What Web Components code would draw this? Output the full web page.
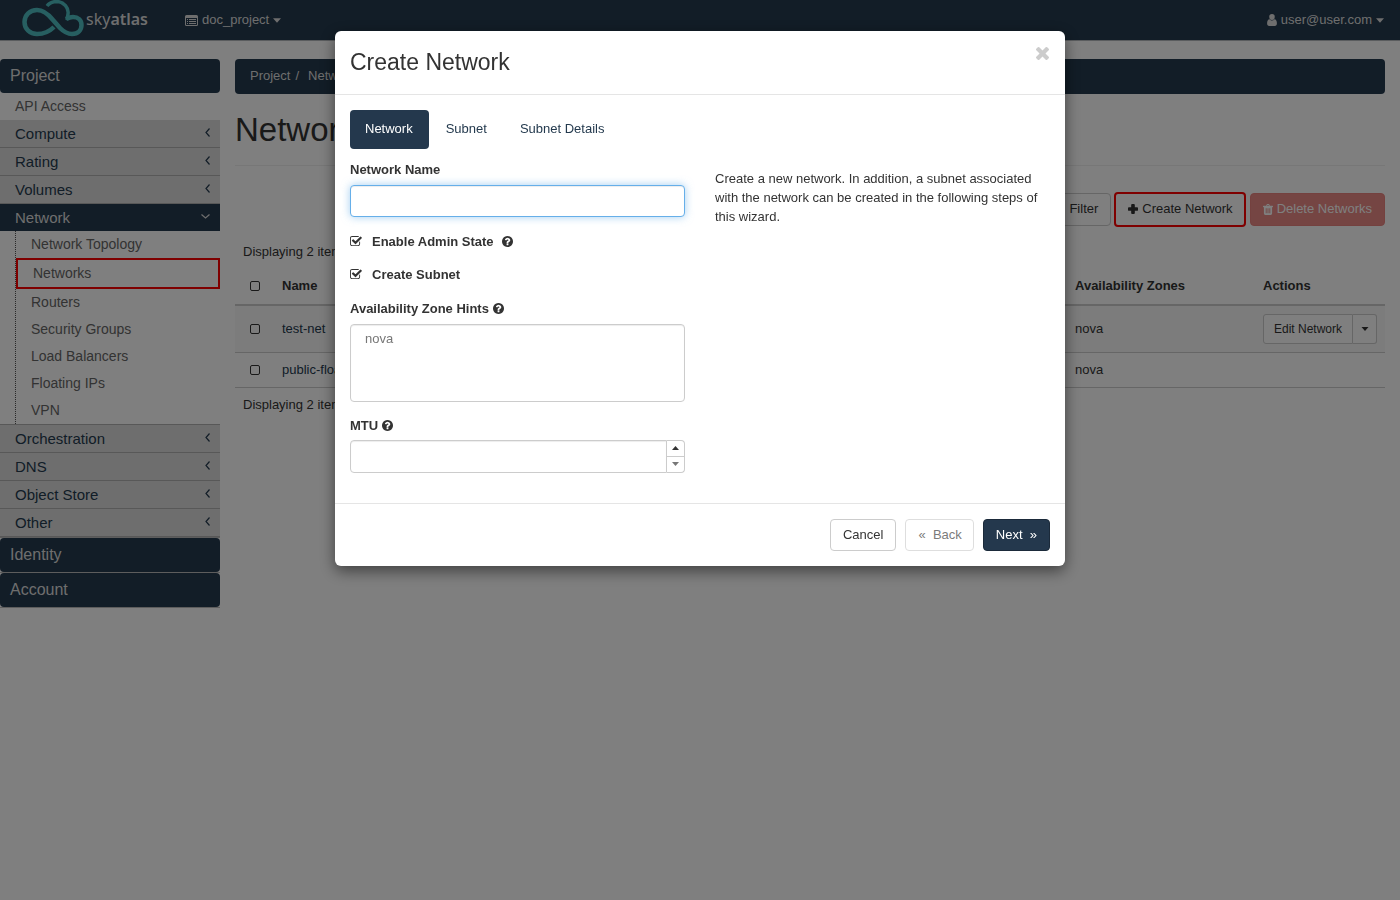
<!DOCTYPE html>
<html lang="en">
<head>
<meta charset="utf-8">
<title>Networks - Create Network</title>
<style>
  body { margin: 0; background: #fff; color: #333; font: 13px/18px "Liberation Sans", Arial, sans-serif; }
</style>
</head>
<body>
<cloud-dashboard></cloud-dashboard>
<script>
const base = `*,*::before,*::after{box-sizing:border-box}
a{color:inherit;text-decoration:none}
button,input,select{font:inherit;color:inherit;margin:0}`;

function define(name, css, html, setup) {
  const template = document.createElement('template');
  customElements.define(name, class extends HTMLElement {
    constructor() {
      super();
      template.innerHTML = `<style>${base}${css}</style>${typeof html === 'function' ? html(this) : html}`;
      this.attachShadow({ mode: 'open' }).append(template.content.cloneNode(true));
      if (setup) setup(this, this.shadowRoot);
    }
  });
}

const icons = {
  'help': ['0 128 1536 1536', '<path d="M896 1376v-192q0-14-9-23t-23-9H672q-14 0-23 9t-9 23v192q0 14 9 23t23 9h192q14 0 23-9t9-23zm256-672q0-88-55.5-163T958 425t-170-41q-243 0-371 213-15 24 8 42l132 100q7 6 19 6 16 0 25-12 53-68 86-92 34-24 86-24 48 0 85.5 26t37.5 59q0 38-20 61t-68 45q-63 28-115.5 86.5T640 1020v36q0 14 9 23t23 9h192q14 0 23-9t9-23q0-19 21.5-49.5T972 957q32-18 49-28.5t46-35 44.5-48 28-60.5 12.5-81zm384 192q0 209-103 385.5T1153.5 1561 768 1664t-385.5-103T103 1281.5 0 896t103-385.5T382.5 231 768 128t385.5 103T1433 510.5 1536 896z"/>'],
  'close': ['110 366 1188 1188', '<path d="M1298 1322q0 40-28 68l-136 136q-28 28-68 28t-68-28l-294-294-294 294q-28 28-68 28t-68-28L138 1390q-28-28-28-68t28-68l294-294-294-294q-28-28-28-68t28-68l136-136q28-28 68-28t68 28l294 294 294-294q28-28 68-28t68 28l136 136q28 28 28 68t-28 68L976 960l294 294q28 28 28 68z"/>'],
  'list': ['0 0 26 22', '<path fill-rule="evenodd" d="M3 0h20a3 3 0 0 1 3 3v16a3 3 0 0 1-3 3H3a3 3 0 0 1-3-3V3a3 3 0 0 1 3-3zM2 6v13q0 1 1 1h20q1 0 1-1V6zM4 8h2v2H4zm0 4h2v2H4zm0 4h2v2H4zM8 8h14v2H8zm0 4h14v2H8zm0 4h14v2H8z"/>'],
  'user': ['0 0 18 22', '<path d="M9 0a5 5 0 0 1 5 5.500a5 5.500 0 0 1-10 0A5 5 0 0 1 9 0zM4.500 9.500Q6.500 12 9 12t4.500-2.500Q18 10 18 17q0 5-4 5H4q-4 0-4-5 0-7 4.500-7.500z"/>'],
  'plus': ['0 0 22 22', '<path d="M9 0h4q2 0 2 2v5h5q2 0 2 2v4q0 2-2 2h-5v5q0 2-2 2H9q-2 0-2-2v-5H2q-2 0-2-2V9q0-2 2-2h5V2q0-2 2-2z"/>'],
  'trash': ['0 0 22 24', '<path fill-rule="evenodd" d="M7 4l1-3q.5-1 1.500-1h3q1 0 1.500 1l1 3h6q1 0 1 1v1q0 1-1 1h-1v14q0 3-3 3H5q-3 0-3-3V7H1q-1 0-1-1V5q0-1 1-1zm2 0h4l-.5-2h-3zM6 9v11h2V9zm4 0v11h2V9zm4 0v11h2V9z"/>'],
  'caret-down': ['0 0 14 8', '<path d="M0 0h14L7 8z"/>'],
  'caret-up': ['0 0 14 8', '<path d="M0 8h14L7 0z"/>'],
  'left': ['0 0 10 18', '<path fill="none" stroke="currentColor" stroke-width="2.400" d="M9 1L2 9l7 8"/>'],
  'down': ['0 0 18 10', '<path fill="none" stroke="currentColor" stroke-width="2.400" d="M1 1l8 7 8-7"/>']
};
define('ui-icon', `:host{display:inline-flex;width:13px;height:11px;flex:none}svg{display:block;width:100%;height:100%;fill:currentColor}`,
  '<svg aria-hidden="true"></svg>', (el, root) => {
    const [box, art] = icons[el.getAttribute('name')] || ['0 0 1 1', ''];
    const svg = root.querySelector('svg');
    svg.setAttribute('viewBox', box);
    svg.innerHTML = art;
  });

define('brand-logo', `:host{display:block}
a{display:flex;align-items:center;color:#ddd;height:40px}
svg{width:64px;height:40px;flex:none}
span{font:16px/20px "Noto Sans",sans-serif;padding:0 0 2px 1px}
b{font-weight:600}`,
`<a href="#" aria-label="skyatlas"><svg viewBox="0 0 64 40" fill="none" stroke="#4fbfc3" stroke-width="4.500" stroke-linecap="butt">
<path d="M33 27C28 32 22 34 16 34C9 34 3.500 29 3.500 22C3.500 15 9 10 16 10C23 10 28 15 32 20L39 28C43 32 47 34 51 34C57 34 60.500 30 60.500 25C60.500 20 57 17 52 17C49 17 47 18 45 19"/>
<path stroke-width="3.500" d="M26 6C29 2 32 1.500 36 1.500C43 2 48 8 47 14L46 20"/>
</svg><span>sky<b>atlas</b></span></a>`);

define('top-bar', `:host{display:block;background:#243a4e;border-bottom:1px solid #b4b8bc;background-clip:padding-box;color:#ddd}
nav{display:flex;align-items:center;height:40px;padding:0 16px 0 21px}
.menu{display:flex;align-items:center;gap:4px;margin-left:37px}
.user{margin-left:auto}
.person{width:10px;height:12px;margin-bottom:1px}.caret{width:8px;height:5px}`,
`<nav><brand-logo></brand-logo>
<a class="menu" href="#"><ui-icon name="list"></ui-icon>doc_project<ui-icon class="caret" name="caret-down"></ui-icon></a>
<a class="menu user" href="#"><ui-icon class="person" name="user"></ui-icon>user@user.com<ui-icon class="caret" name="caret-down"></ui-icon></a></nav>`);

define('nav-section', `:host{display:block;border-bottom:1px solid #bbb}
.head{display:flex;align-items:center;height:34px;padding:0 10px;border-radius:4px;background:#243a4e;color:#ddd;font-size:16px}`,
  el => `<a class="head" href="#">${el.getAttribute('label')}</a><slot></slot>`);

define('nav-group', `:host{display:block;border-bottom:1px solid #b0b0b0}
.head{display:flex;align-items:center;justify-content:space-between;height:27px;padding:0 10px 0 15px;background:#ddd;color:#243a4e;font-size:15px;line-height:19px}
.head ui-icon{width:5px;height:9px;margin-bottom:2px}
:host([open]) .head{background:#243a4e;color:#ddd}
:host([open]) .head ui-icon{width:9px;height:5px}
.items{display:none;margin-left:15px;border-left:1px dotted #555}
:host([open]) .items{display:block}`,
  el => `<a class="head" href="#">${el.getAttribute('label')}<ui-icon name="${el.hasAttribute('open') ? 'down' : 'left'}"></ui-icon></a><div class="items"><slot></slot></div>`);

define('nav-link', `:host{display:block;font-size:14px;line-height:19px;color:#666}
a{display:flex;align-items:center;height:27px;padding:0 15px}
:host([marked]){border:2px solid #f00}`,
  `<a href="#"><slot></slot></a>`);

define('side-nav', `:host{display:block;width:220px;flex:none}`,
`<nav><nav-section label="Project"><nav-link>API Access</nav-link>
<nav-group label="Compute"></nav-group><nav-group label="Rating"></nav-group><nav-group label="Volumes"></nav-group>
<nav-group label="Network" open><nav-link>Network Topology</nav-link><nav-link marked>Networks</nav-link><nav-link>Routers</nav-link><nav-link>Security Groups</nav-link><nav-link>Load Balancers</nav-link><nav-link>Floating IPs</nav-link><nav-link>VPN</nav-link></nav-group>
<nav-group label="Orchestration"></nav-group><nav-group label="DNS"></nav-group><nav-group label="Object Store"></nav-group><nav-group label="Other"></nav-group></nav-section>
<nav-section label="Identity"></nav-section><nav-section label="Account"></nav-section></nav>`);

define('network-table', `:host{display:block}
p{margin:0;padding:8px}
table{width:100%;border-collapse:separate;border-spacing:0;table-layout:fixed}
th,td{text-align:left;padding:0 8px;border-bottom:1px solid #ccc}
th{height:37px;padding-bottom:2px;border-bottom:2px solid #ccc}
td{height:35px}
.tall td{height:47px;background:#f9f9f9}
.pick{width:39px;padding-left:15px}
.name{width:180px}.zone{width:188px}.act{width:130px}
td a{color:#243a4e}
input{appearance:none;display:block;width:10px;height:10px;border:1px solid #333;border-radius:2px}
.split{display:flex;width:114px;height:30px}
.split button{display:flex;align-items:center;justify-content:center;background:#fff;border:1px solid #ccc;padding:0;font-size:12px}
.split button:first-child{flex:1;border-radius:3px 0 0 3px}
.split button:last-child{width:24px;border-left:0;border-radius:0 3px 3px 0}
.split ui-icon{width:8px;height:4px}`,
`<p>Displaying 2 items</p>
<table><thead><tr><th class="pick"><input type="checkbox" aria-label="Select all"></th><th class="name">Name</th><th></th><th class="zone">Availability Zones</th><th class="act">Actions</th></tr></thead>
<tbody><tr class="tall"><td class="pick"><input type="checkbox" aria-label="Select test-net"></td><td><a href="#">test-net</a></td><td></td><td>nova</td><td><div class="split"><button>Edit Network</button><button aria-label="More actions"><ui-icon name="caret-down"></ui-icon></button></div></td></tr>
<tr><td class="pick"><input type="checkbox" aria-label="Select public-floating"></td><td><a href="#">public-floating</a></td><td></td><td>nova</td><td></td></tr></tbody></table>
<p>Displaying 2 items</p>`);

define('networks-page', `:host{display:block;flex:1;min-width:0}
.crumbs{display:flex;align-items:center;height:35px;padding:0 15px 1px;background:#243a4e;color:#ddd;border-radius:4px}
.crumbs span{padding:0 9px 0 5px}
h1{margin:18px 0 0;padding-bottom:17px;font-size:33px;line-height:36px;font-weight:400;border-bottom:1px solid #eee}
.tools{display:flex;justify-content:flex-end;align-items:center;margin:26px 0 8px;height:35px}
button{display:flex;align-items:center;gap:4px;height:33px;padding:0 12px 1px;border:1px solid #ccc;border-radius:4px;background:#fff}
.create{height:35px;margin:0 4px 0 3px;padding:0 11px 1px 12px;border:2px solid #f00}
.delete{background:#ea8a86;border-color:#e8827e;color:#fff}
.plus{width:10px;height:10px}.trash{width:10px;height:11px}`,
`<nav class="crumbs" aria-label="Breadcrumb"><a href="#">Project</a><span>/</span><a href="#">Network</a></nav>
<h1>Networks</h1>
<div class="tools"><button>Filter</button><button class="create"><ui-icon class="plus" name="plus"></ui-icon>Create Network</button><button class="delete"><ui-icon class="trash" name="trash"></ui-icon>Delete Networks</button></div>
<network-table></network-table>`);

define('check-field', `:host{display:block}
label{display:flex;align-items:center;height:19px;line-height:19px;font-weight:700}
.box{display:grid;width:11px;height:11px;margin-right:11px}
.box>*{grid-area:1/1}
input{appearance:none;width:11px;height:11px}
svg{width:11px;height:11px;overflow:visible;pointer-events:none;fill:#333}
input:not(:checked)+svg .tick{display:none}
ui-icon{width:11px;height:11px;margin-left:8px}`,
  el => `<label><span class="box"><input type="checkbox" checked><svg viewBox="0 0 1536 1536"><path d="M1408 802v318q0 119-84.500 203.500t-203.500 84.500h-832q-119 0-203.500-84.500T0 1120V288q0-119 84.500-203.500T288 0h832q63 0 117 25 15 7 18 23 3 17-9 29l-49 49q-10 10-23 10-3 0-9-2-23-6-45-6H288q-66 0-113 47t-47 113v832q0 66 47 113t113 47h832q66 0 113-47t47-113V866q0-13 9-22l64-64q10-10 23-10 6 0 12 3 20 8 20 29z"/><path class="tick" d="M1639 313l-814 814q-24 24-57 24t-57-24L281 697q-24-24-24-57t24-57l110-110q24-24 57-24t57 24l263 263 647-647q24-24 57-24t57 24l110 110q24 24 24 57t-24 57z"/></svg></span><slot></slot>${el.hasAttribute('help') ? '<ui-icon name="help"></ui-icon>' : ''}</label>`);

define('network-form', `:host{display:block}
.row{display:grid;grid-template-columns:1fr 1fr;gap:30px}
label{display:flex;align-items:center;gap:4px;height:18px;margin-bottom:6px;font-weight:700}
label ui-icon{width:11px;height:11px;margin-bottom:1px}
.text{display:block;width:100%;height:32px;padding:6px 12px;border:1px solid #ccc;border-radius:4px;background:#fff;box-shadow:inset 0 1px 1px rgba(0,0,0,.075);outline:0}
.active{border-color:#66afe9;box-shadow:inset 0 1px 1px rgba(0,0,0,.075),0 0 8px rgba(102,175,233,.6)}
check-field{margin-top:15px}
check-field+check-field{margin-top:14px}
check-field+label{margin-top:16px}
select+label{margin:15px 0 5px}
select{display:block;width:100%;height:78px;padding:6px 12px;border:1px solid #ccc;border-radius:4px;background:#fff;box-shadow:inset 0 1px 1px rgba(0,0,0,.075);color:#777;outline:0;overflow:auto}
option{min-height:19px;padding:0 2px;line-height:19px}
.spin{display:flex;height:33px}
.spin .text{height:33px;flex:1;min-width:0;border-radius:4px 0 0 4px;appearance:textfield}
.steps{display:flex;flex-direction:column;width:18px}
.steps button{display:flex;align-items:center;justify-content:center;flex:1;padding:0 0 1px;border:1px solid #ccc;border-left:0;background:#fff}
.steps button:first-child{border-radius:0 4px 0 0}
.steps button:last-child{border-top:0;border-radius:0 0 4px 0;color:#777}
.steps ui-icon{width:7px;height:4px}
p{margin:8px 0 0;line-height:19px}`,
`<div class="row"><form>
<label for="name">Network Name</label><input class="text active" id="name" type="text">
<check-field help>Enable Admin State</check-field><check-field>Create Subnet</check-field>
<label for="zones">Availability Zone Hints <ui-icon name="help"></ui-icon></label>
<select id="zones" multiple><option>nova</option></select>
<label for="mtu">MTU <ui-icon name="help"></ui-icon></label>
<div class="spin"><input class="text" id="mtu" type="number"><div class="steps"><button type="button" aria-label="Increase"><ui-icon name="caret-up"></ui-icon></button><button type="button" aria-label="Decrease"><ui-icon name="caret-down"></ui-icon></button></div></div>
</form><p>Create a new network. In addition, a subnet associated with the network can be created in the following steps of this wizard.</p></div>`);

define('network-dialog', `:host{position:fixed;inset:0;display:flex;justify-content:center;align-items:flex-start;padding-top:31px;background:rgba(0,0,0,.5);overflow:auto}
section{width:100%;max-width:730px;background:#fff;border-radius:6px;box-shadow:0 5px 15px rgba(0,0,0,.5)}
header{display:flex;justify-content:space-between;align-items:flex-start;padding:15px;height:64px;border-bottom:1px solid #e5e5e5}
h2{margin:0;font-size:23px;line-height:32px;font-weight:400}
.close{display:flex;padding:1px 0;border:0;background:none;color:#ccc}
.close ui-icon{width:15px;height:13px}
.body{padding:15px}
.tabs{display:flex;gap:2px;margin-bottom:12px;color:#243a4e}
.tabs a{padding:10px 16px 11px 15px;border-radius:4px}
.tabs .on{background:#24384d;color:#fff}
footer{display:flex;justify-content:flex-end;gap:9px;padding:15px;margin-top:15px;border-top:1px solid #e5e5e5}
footer button{height:32px;padding:0 12px 1px;border:1px solid #ccc;border-radius:4px;background:#fff;white-space:pre}
footer .back{opacity:.65;padding:0 11px 1px 12px}
footer .go{background:#24384d;border-color:#1b2a3a;color:#fff}`,
`<section role="dialog" aria-labelledby="title"><header><h2 id="title">Create Network</h2><button class="close" aria-label="Close"><ui-icon name="close"></ui-icon></button></header>
<div class="body"><nav class="tabs"><a class="on" href="#">Network</a><a href="#">Subnet</a><a href="#">Subnet Details</a></nav><network-form></network-form></div>
<footer><button>Cancel</button><button class="back" disabled>«  Back</button><button class="go">Next  »</button></footer></section>`);

define('cloud-dashboard', `:host{display:block;min-height:100vh}
main{display:flex;gap:15px;padding:18px 15px 18px 0}`,
`<top-bar></top-bar><main><side-nav></side-nav><networks-page></networks-page></main><network-dialog></network-dialog>`);
</script>
</body>
</html>
